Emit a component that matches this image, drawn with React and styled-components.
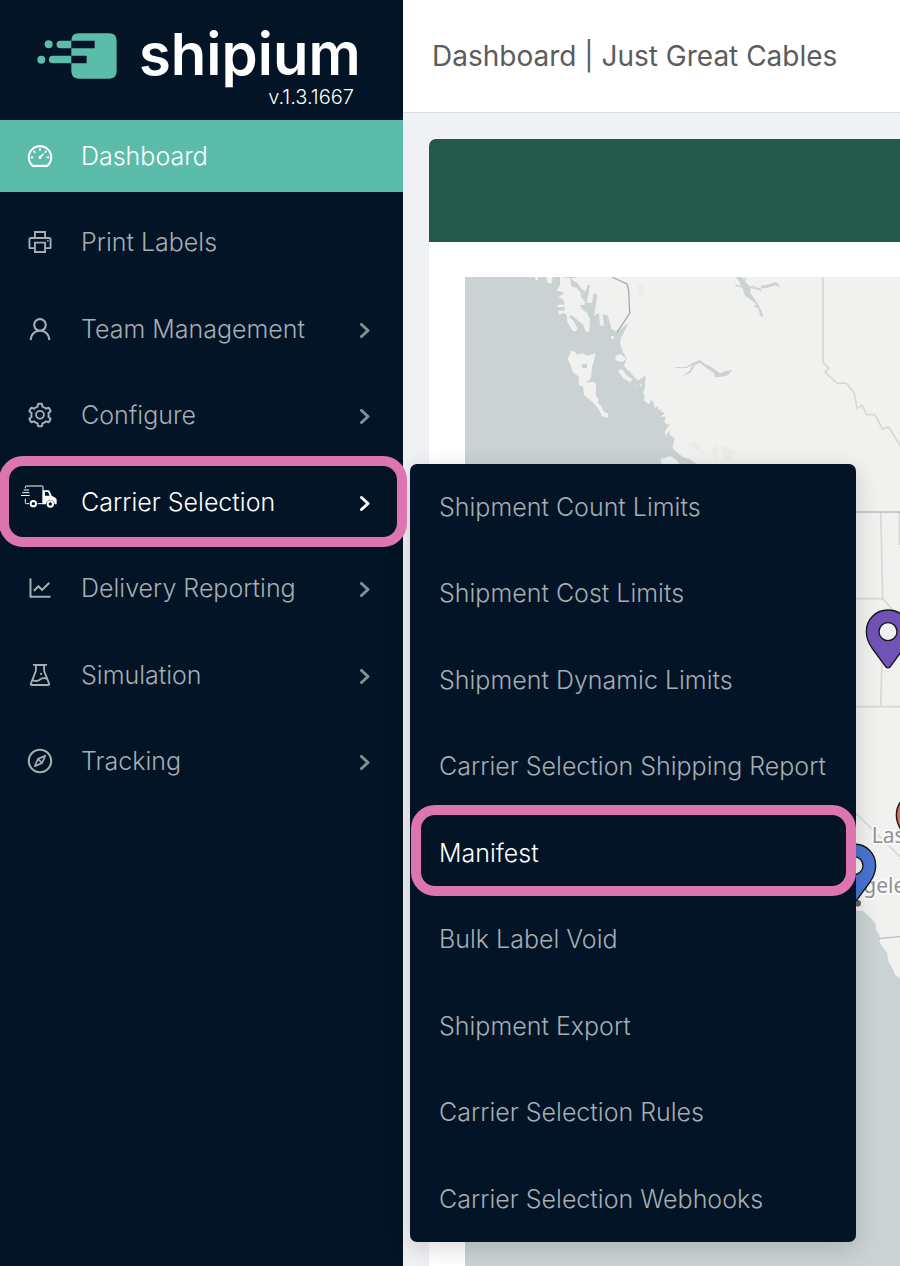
import React from "react";
import styled, { createGlobalStyle, css } from "styled-components";
import {
  AiOutlineDashboard,
  AiOutlinePrinter,
  AiOutlineUser,
  AiOutlineSetting,
  AiOutlineLineChart,
  AiOutlineExperiment,
  AiOutlineCompass,
} from "react-icons/ai";

const navy = "#021425";
const teal = "#5bbcaa";
const pink = "#dd75b3";
const muted = "#a6adb3";

const GlobalStyle = createGlobalStyle`
  *, *::before, *::after { box-sizing: border-box; }
  body {
    margin: 0;
    background: #f0f1f5;
    font-family: Inter, "Liberation Sans", sans-serif;
    font-weight: 300;
    overflow-x: hidden;
  }
`;

const Page = styled.div`
  display: flex;
  min-height: 100vh;
`;

const Sidebar = styled.aside`
  flex: 0 0 403px;
  background: ${navy};
  position: relative;
  z-index: 2;
`;

const Brand = styled.div`
  height: 120px;
  padding: 22px 0 0 37px;
`;

const BrandRow = styled.div`
  display: flex;
  align-items: center;
  gap: 22px;
  height: 64px;
`;

const LogoMark = styled.svg`
  width: 80px;
  height: 46px;
  margin-top: 4px;
  flex: none;
`;

const Wordmark = styled.span`
  font-size: 58px;
  line-height: 64px;
  font-weight: 600;
  color: #fff;
`;

const Version = styled.div`
  margin-right: 49px;
  text-align: right;
  font-size: 20px;
  line-height: 22px;
  color: #fff;
`;

const NavList = styled.ul`
  display: flex;
  flex-direction: column;
  justify-content: space-between;
  min-height: 677px;
  margin: 0;
  padding: 0;
  list-style: none;
`;

const NavItem = styled.li`
  position: relative;
`;

const rowStyle = css`
  display: flex;
  align-items: center;
  width: 100%;
  height: 72px;
  border: 0;
  font: inherit;
  font-size: 25px;
  line-height: 32px;
  text-align: left;
  text-decoration: none;
  white-space: nowrap;
  cursor: pointer;
`;

const NavLink = styled.a`
  ${rowStyle}
  gap: 27px;
  padding: 0 32px 0 26px;
  background: ${(p) => (p.$active ? teal : "transparent")};
  color: ${(p) => (p.$bright ? "#fff" : muted)};
`;

const IconSlot = styled.span`
  display: flex;
  justify-content: center;
  flex: 0 0 28px;
  width: 28px;
  svg { flex: none; }
`;

const NavLabel = styled.span`
  flex: 1;
`;

const Chevron = styled.svg`
  width: 13px;
  height: 17px;
  margin-top: 3px;
  flex: none;
  opacity: ${(p) => (p.$bright ? 1 : 0.8)};
`;

const Flyout = styled.ul`
  position: absolute;
  left: calc(100% + 7px);
  top: -2px;
  width: 446px;
  min-height: 778px;
  display: flex;
  flex-direction: column;
  justify-content: space-between;
  margin: 0;
  padding: 7px 0;
  list-style: none;
  background: ${navy};
  border-radius: 7px;
  box-shadow: 0 6px 24px rgba(0, 0, 0, 0.16);
`;

const FlyoutLink = styled.a`
  ${rowStyle}
  padding: 0 29px;
  color: ${(p) => (p.$bright ? "#fff" : muted)};
`;

const Highlight = styled.span`
  position: absolute;
  inset: ${(p) => p.$inset};
  border: 10px solid ${pink};
  border-radius: 24px;
  pointer-events: none;
  z-index: 1;
`;

const Content = styled.main`
  flex: 1;
  min-width: 0;
  display: flex;
  flex-direction: column;
`;

const TopBar = styled.header`
  height: 113px;
  display: flex;
  align-items: center;
  padding: 0 29px;
  background: #fff;
  border-bottom: 1px solid #d9dbdc;
`;

const Title = styled.h1`
  margin: 0;
  font-size: 28px;
  line-height: 36px;
  font-weight: 400;
  color: #5c5c5c;
  white-space: nowrap;
`;

const Card = styled.section`
  flex: 1;
  display: flex;
  flex-direction: column;
  margin: 26px 0 0 26px;
  background: #fff;
  border-top-left-radius: 7px;
  overflow: hidden;
`;

const CardBanner = styled.div`
  height: 103px;
  background: #24584b;
`;

const MapFrame = styled.div`
  flex: 1;
  display: grid;
  margin: 35px 0 0 36px;
  min-height: 900px;
  background: #cad2d3;
  overflow: hidden;
`;

const MapSvg = styled.svg`
  width: 100%;
  height: 100%;
  min-height: 0;
`;

const MapLabel = styled.text`
  font-family: "Noto Sans", sans-serif;
  font-size: 63px;
  font-weight: 400;
  fill: #929292;
  stroke: #fafafa;
  stroke-width: 12px;
  stroke-linejoin: round;
  paint-order: stroke;
`;

function TruckIcon() {
  return (
    <svg width="38" height="38" viewBox="64 98 114 114" overflow="visible" fill="none" stroke="currentColor" strokeWidth="3" aria-hidden="true">
      <path d="M77 114V110Q77 107 80 107H127Q130 107 130 110V160H114M77 145V157Q77 160 80 160H88" />
      <path d="M72 119H88M68 127H89M64 135.500H90" />
      <path
        fill="currentColor"
        stroke="none"
        fillRule="evenodd"
        d="M129 120H146Q149 120 151 124L156 136L167 142Q171 145 171 149V162H165A13 13 0 0 0 139 162H129ZM136 125V136H150L145 125Z"
      />
      <circle cx="101" cy="160" r="8" strokeWidth="6" />
      <circle cx="152" cy="161" r="8" strokeWidth="6" />
    </svg>
  );
}

function Logo() {
  return (
    <LogoMark viewBox="112 98 240 138" fill={teal} aria-hidden="true">
      <path d="M237 99H329Q351 99 351 121V213Q351 235 329 235H237Q215 235 215 213V189H261V166H215V144H285V121H215Q215 99 237 99Z" />
      <path d="M215 121H182A11.500 11.500 0 0 0 182 144H215ZM215 166H159A11.500 11.500 0 0 0 159 189H215Z" />
      <circle cx="147" cy="132" r="12" />
      <circle cx="125" cy="178" r="12" />
    </LogoMark>
  );
}

function Arrow({ bright }) {
  return (
    <Chevron $bright={bright} viewBox="0 0 13 17" fill="none" stroke="currentColor" strokeWidth="3" strokeLinecap="round" strokeLinejoin="round" aria-hidden="true">
      <path d="M3.500 2.500L10 8.500L3.500 14.500" />
    </Chevron>
  );
}

function Pin({ x, y, color }) {
  return (
    <path
      transform={`translate(${x} ${y})`}
      fill={color}
      fillRule="evenodd"
      stroke="#151515"
      strokeWidth="4"
      d="M0-65C37-65 65-37 65 0C65 20 58 34 48 49L7 105Q0 112-7 105L-48 49C-58 34-65 20-65 0C-65-37-37-65 0-65ZM0-27A27 27 0 1 0 0 27A27 27 0 1 0 0-27Z"
    />
  );
}

function ShipmentMap() {
  return (
    <MapSvg viewBox="195 51 1305 2967" preserveAspectRatio="xMinYMin slice" role="img" aria-label="Shipment map">
      <g fill="#f1f1ef">
        <path d="M480 51L510 55L515 80L530 84L542 98L543 112L556 126L552 136L540 134L545 146L562 160L570 178L568 215L557 215L550 195L535 182L515 165L508 170L520 182L532 205L528 215L517 212L502 185L500 165L490 158L478 165L474 152L492 152L495 140L472 142L475 134L495 134L490 120L475 108L490 105L490 96L470 92L480 75Z" />
        <path d="M530 51H1500V2155L1485 2145L1480 2130L1465 2105L1462 2080L1440 2050L1438 2025L1428 2010L1426 1990L1410 1972L1388 1952H1368L1200 1600L1000 900L890 612L870 597L850 592L840 584L820 568L818 560L824 535L810 525L808 510L797 528L795 515L810 490L800 495L793 484L798 470L782 470L795 458L783 455L785 448L773 450L775 438L765 445L760 425L750 420L750 432L742 430L730 420L735 410L730 400L735 380L737 345L715 362L692 340L672 318L680 295L668 275L660 250L662 235L683 195L680 192L653 217L635 208L624 167L608 162L612 197L600 197L597 158L582 168L592 105L582 98L575 130L560 128L570 75L562 76L557 95L545 88L535 72L512 57Z" />
        <path d="M650 285L662 282L672 290L678 296L668 306L650 303L645 293ZM657 327L670 330L678 345L697 357L692 368L670 355L656 337ZM633 228L642 229L640 237H634ZM405 51H414V62L406 58ZM438 51H458L454 71L443 68ZM707 376L712 374V380ZM718 371H724V382Z" />
        <path d="M513 272L525 275L530 283L548 280L560 287L587 280L580 310L576 322L573 355L558 368L582 365L588 372V408L597 420L593 428L605 440L608 450L618 460L625 458L623 473L605 468L598 450L580 428L552 405L550 382L537 375L536 350L518 335L512 315L502 295L508 288Z" />
        <path d="M782 598L810 588L830 600L838 612H785Z" />
      </g>
      <g fill="#cad2d3">
        <path d="M546 316L550 312H561V324H546ZM675 330L690 335L694 344L683 341Z" />
        <path d="M1008 51H1026L1032 58L1040 51L1035 64L1048 78L1060 84L1053 75L1068 82L1084 86L1082 78L1110 72L1128 66L1142 82L1124 76L1104 83L1082 86L1085 98L1078 90L1052 84L1050 98L1072 128L1087 158L1089 174L1080 165L1075 145L1062 140L1068 132L1034 105L1028 83L1008 78L1005 72L1024 78L1020 68Z" />
        <path d="M825 321H858L878 309L900 300L915 312L935 322L960 340L980 332L996 330L983 346L965 350L945 352L942 340L915 320L900 309L885 315L873 337L846 350L870 331L878 315L860 324L825 323Z" />
      </g>
      <path fill="#ececea" d="M710 66L731 72V112L713 102ZM862 552L885 542L900 558L915 584L880 568ZM930 570L954 548L950 600ZM960 555L1008 574L990 600L975 604Z" />
      <g fill="none" stroke="#d7d7d6" strokeWidth="5" strokeLinejoin="round">
        <path d="M1269 51V308L1287 325L1275 337L1312 370L1338 369L1363 400L1371 446L1386 435L1400 464H1425L1448 508L1465 500L1500 555" />
        <path d="M1442 756L1448 1016L1500 1075M1368 1016H1448M1447 1150L1442 1340M1368 1340H1500M1498 756V855M1368 1660L1500 1790" />
      </g>
      <path d="M1368 756H1500M1436 2036L1500 2030" fill="none" stroke="#bbb" strokeWidth="4" />
      <path d="M635 51L681 72L686 90L689 160L651 217" fill="none" stroke="#aaa" strokeWidth="4" />
      <circle cx="1373" cy="1930" r="10" fill="#666" />
      <MapLabel x="1415" y="1748">Las Vegas</MapLabel>
      <MapLabel x="1193" y="1898">Los Angeles</MapLabel>
      <Pin x={1464} y={1115} color="#7153b8" />
      <Pin x={1362} y={1817} color="#4a74d2" />
      <Pin x={1554} y={1665} color="#e36b52" />
    </MapSvg>
  );
}

const navItems = [
  { label: "Dashboard", icon: <AiOutlineDashboard size={28} />, active: true },
  { label: "Print Labels", icon: <AiOutlinePrinter size={28} /> },
  { label: "Team Management", icon: <AiOutlineUser size={28} />, submenu: true },
  { label: "Configure", icon: <AiOutlineSetting size={28} />, submenu: true },
  { label: "Carrier Selection", icon: <TruckIcon />, submenu: true, open: true },
  { label: "Delivery Reporting", icon: <AiOutlineLineChart size={28} />, submenu: true },
  { label: "Simulation", icon: <AiOutlineExperiment size={28} />, submenu: true },
  { label: "Tracking", icon: <AiOutlineCompass size={28} />, submenu: true },
];

const carrierItems = [
  "Shipment Count Limits",
  "Shipment Cost Limits",
  "Shipment Dynamic Limits",
  "Carrier Selection Shipping Report",
  "Manifest",
  "Bulk Label Void",
  "Shipment Export",
  "Carrier Selection Rules",
  "Carrier Selection Webhooks",
];

function CarrierMenu() {
  return (
    <Flyout>
      {carrierItems.map((label) => {
        const selected = label === "Manifest";
        return (
          <NavItem key={label}>
            <FlyoutLink href="#" $bright={selected}>{label}</FlyoutLink>
            {selected && <Highlight $inset="-12px 0 -7px 1px" />}
          </NavItem>
        );
      })}
    </Flyout>
  );
}

export default function App() {
  return (
    <>
      <GlobalStyle />
      <Page>
        <Sidebar>
          <Brand>
            <BrandRow>
              <Logo />
              <Wordmark>shipium</Wordmark>
            </BrandRow>
            <Version>v.1.3.1667</Version>
          </Brand>
          <nav aria-label="Main">
            <NavList>
              {navItems.map((item) => (
                <NavItem key={item.label}>
                  <NavLink
                    as={item.submenu ? "button" : "a"}
                    href={item.submenu ? undefined : "#"}
                    type={item.submenu ? "button" : undefined}
                    aria-expanded={item.submenu ? Boolean(item.open) : undefined}
                    $active={item.active}
                    $bright={item.active || item.open}
                  >
                    <IconSlot>{item.icon}</IconSlot>
                    <NavLabel>{item.label}</NavLabel>
                    {item.submenu && <Arrow bright={item.open} />}
                  </NavLink>
                  {item.open && <Highlight $inset="-10px -4px -9px -1px" />}
                  {item.open && <CarrierMenu />}
                </NavItem>
              ))}
            </NavList>
          </nav>
        </Sidebar>
        <Content>
          <TopBar>
            <Title>Dashboard | Just Great Cables</Title>
          </TopBar>
          <Card>
            <CardBanner />
            <MapFrame>
              <ShipmentMap />
            </MapFrame>
          </Card>
        </Content>
      </Page>
    </>
  );
}
